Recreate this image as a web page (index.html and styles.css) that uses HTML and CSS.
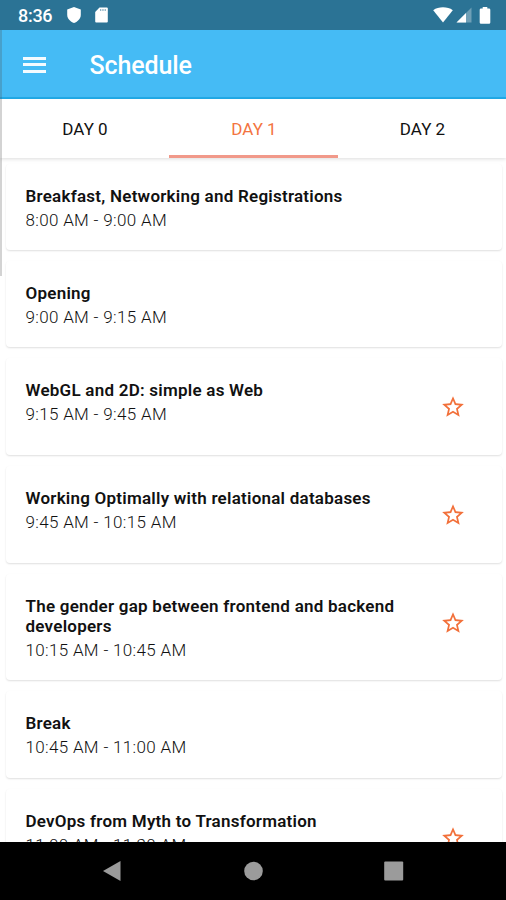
FILE: index.html
```html
<!DOCTYPE html>
<html lang="en">
<head>
<meta charset="utf-8">
<title>Schedule</title>
<link rel="stylesheet" href="styles.css">
</head>
<body>
<svg class="defs" width="0" height="0"><symbol id="star" viewBox="0 0 24 24"><path d="M22 9.24l-7.19-.62L12 2 9.19 8.63 2 9.24l5.46 4.73L5.82 21 12 17.27 18.18 21l-1.63-7.03L22 9.24zM12 15.4l-3.76 2.27 1-4.28-3.32-2.88 4.38-.38L12 6.1l1.71 4.04 4.38.38-3.32 2.88 1 4.28L12 15.4z"/></symbol></svg>
<div class="screen">
  <div class="status">
    <span class="clock">8:36</span>
    <svg class="shield" width="14" height="16" viewBox="0 0 14 16"><path d="M7 0l6.8 2.6v5.2c0 4-3 6.9-6.8 8.2C3.200 14.700.2 11.800.2 7.800V2.600z"/></svg>
    <svg class="sd" width="13" height="16" viewBox="0 0 13 16"><path d="M4.500.5h7.300q1 0 1 1v13q0 1-1 1H1.200q-1 0-1-1V5z"/><path class="pins" d="M5 2h1.300v2H5zM7.300 2h1.300v2H7.300zM9.600 2h1.300v2H9.600z"/></svg>
    <div class="signals">
      <svg width="20" height="16" viewBox="0 0 20 16"><path d="M10 15.500L.2 3.200C5.500-.6 14.500-.6 19.800 3.200z"/></svg>
      <svg class="cell" width="16" height="16" viewBox="0 0 16 16"><path class="dim" d="M15.500.5v15H.5z"/><path d="M10 6v9.500H.5z"/></svg>
      <svg class="battery" width="12" height="17" viewBox="0 0 12 17"><path d="M3.700 0h4.600v1.500h1.700q1.300 0 1.300 1.300v12.700q0 1.300-1.300 1.300H2q-1.300 0-1.300-1.300V2.800Q.7 1.500 2 1.500h1.700z"/></svg>
    </div>
  </div>
  <header class="toolbar">
    <div class="menu"><i></i><i></i><i></i></div>
    <h1>Schedule</h1>
  </header>
  <nav class="tabs">
    <div class="tab">DAY 0</div>
    <div class="tab active">DAY 1</div>
    <div class="tab">DAY 2</div>
  </nav>
  <main class="list">
    <article class="card"><div class="info"><h2>Breakfast, Networking and Registrations</h2><p>8:00 AM - 9:00 AM</p></div></article>
    <article class="card"><div class="info"><h2>Opening</h2><p>9:00 AM - 9:15 AM</p></div></article>
    <article class="card talk"><div class="info"><h2>WebGL and 2D: simple as Web</h2><p>9:15 AM - 9:45 AM</p></div><svg class="star"><use href="#star"/></svg></article>
    <article class="card talk"><div class="info"><h2>Working Optimally with relational databases</h2><p>9:45 AM - 10:15 AM</p></div><svg class="star"><use href="#star"/></svg></article>
    <article class="card talk"><div class="info"><h2>The gender gap between frontend and backend developers</h2><p>10:15 AM - 10:45 AM</p></div><svg class="star"><use href="#star"/></svg></article>
    <article class="card"><div class="info"><h2>Break</h2><p>10:45 AM - 11:00 AM</p></div></article>
    <article class="card talk"><div class="info"><h2>DevOps from Myth to Transformation</h2><p>11:00 AM - 11:30 AM</p></div><svg class="star"><use href="#star"/></svg></article>
  </main>
  <footer class="navbar">
    <svg width="20" height="22" viewBox="0 0 20 22"><path d="M18.500 1v20L1 11z"/></svg>
    <svg width="20" height="22" viewBox="0 0 20 22"><circle cx="10.500" cy="11" r="9.300"/></svg>
    <svg width="20" height="22" viewBox="0 0 20 22"><rect x=".2" y="1.500" width="19" height="19" rx="1"/></svg>
  </footer>
  <div class="edge"></div>
</div>
</body>
</html>
```
FILE: styles.css
```css
* { box-sizing: border-box; }
body { margin: 0; font-family: Roboto, "Liberation Sans", sans-serif; color: #111; background: #fff; }
h1, h2, p { margin: 0; }
svg { display: block; flex: none; }
.defs { position: absolute; }
.screen { position: relative; width: 506px; height: 900px; display: flex; flex-direction: column; overflow: hidden; }
.status { flex: none; height: 30px; padding: 0 16px 0 18px; display: flex; align-items: center; background: #2b7395; color: #fff; fill: #fff; }
.clock { width: 49px; font-size: 18px; font-weight: 500; line-height: 30px; padding-top: 2px; letter-spacing: -.3px; }
.sd { margin-left: 14px; }
.pins { fill: #8fb3c5; }
.signals { margin-left: auto; margin-right: -1px; display: flex; align-items: center; }
.signals svg:first-child { margin-right: 1px; }
.cell { margin-left: 2px; }
.dim { fill: #6f9fb6; }
.battery { margin-left: 7px; }
.toolbar { flex: none; height: 69px; padding: 1px 0 0 23px; display: flex; align-items: center; background: #45bbf5; border-bottom: 2px solid #22acea; color: #fff; }
.menu { width: 66.500px; display: flex; flex-direction: column; gap: 3.500px; padding-top: 1px; }
.menu i { width: 23px; height: 3px; background: #f4fbff; }
h1 { font-size: 25px; font-weight: 500; line-height: 30px; padding-top: 3px; letter-spacing: -.12px; }
.tabs { flex: none; height: 59px; display: grid; grid-template-columns: 169px 169px 168px; z-index: 1; background: #fff; box-shadow: 0 1px 4px rgba(0, 0, 0, .14); }
.tab { display: flex; align-items: center; justify-content: center; padding: 4px 0 0 1px; font-size: 17px; font-weight: 400; border-bottom: 3px solid transparent; }
.active { color: #f37440; border-color: #f1998a; }
.list { flex: 1; min-height: 0; overflow: hidden; padding: 5.700px 4px 0 6px; display: flex; flex-direction: column; gap: 11px; }
.card { flex: none; display: flex; justify-content: space-between; padding: 22px 36px 20.200px 19.500px; border-radius: 4px; background: #fff; box-shadow: 0 1px 2px rgba(0, 0, 0, .13); }
.talk { min-height: 97.100px; }
.info { width: 385px; }
h2 { font-size: 17px; font-weight: 600; line-height: 20px; letter-spacing: .24px; }
p { margin-top: 4px; font-size: 17px; font-weight: 300; line-height: 20px; letter-spacing: .33px; }
.star { width: 26px; height: 26px; margin-top: 14px; fill: #f2703a; }
.navbar { flex: none; height: 58px; padding: 0 102px; display: flex; align-items: center; justify-content: space-between; background: #000; fill: #9b9b9b; z-index: 1; }
.edge { position: absolute; left: 0; top: 30px; width: 2px; height: 246px; background: rgba(80, 80, 80, .25); z-index: 2; }
```
